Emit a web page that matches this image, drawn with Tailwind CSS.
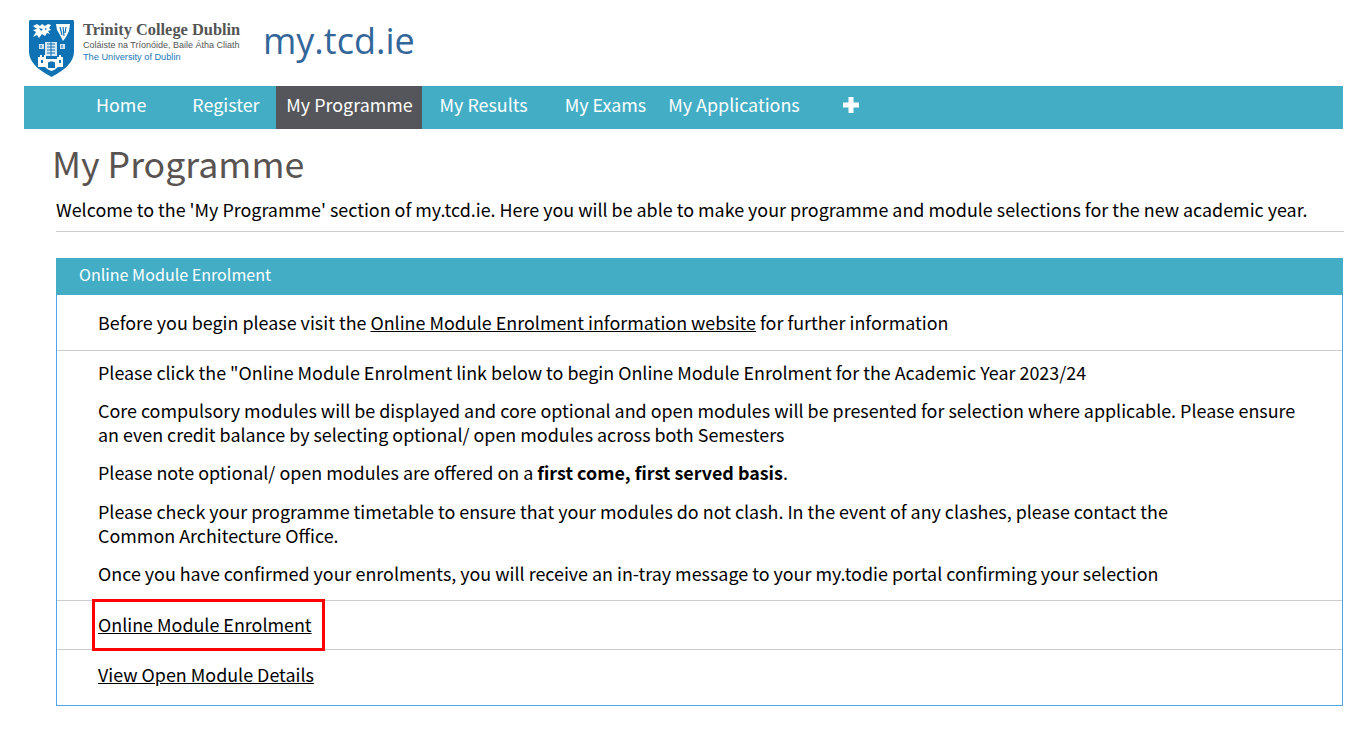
<!DOCTYPE html>
<html lang="en">
  <head>
    <meta charset="UTF-8" />
    <meta name="viewport" content="width=device-width, initial-scale=1.0" />
    <title>my.tcd.ie</title>
    <script src="https://cdn.jsdelivr.net/npm/@tailwindcss/browser@4"></script>
  </head>
  <body class="bg-white text-black font-['Noto_Sans_CJK_JP',sans-serif] text-[17.900px] leading-[24px] overflow-hidden">
    <header class="h-[86px] flex items-start pl-[29px] pt-[20px]">
      <svg class="w-[45px] h-[57px] shrink-0" viewBox="0 0 45 57">
        <path d="M1 0H44L45 1V31C45 44 33 51 22.500 57C12 51 0 44 0 31V1Z" fill="#0f72b5" />
        <!-- lion -->
        <path d="M4 6L8 4L11 6L13 4L16 6L19 4L22 5L20 8L22 10L19 11L21 14L18 13L16 16L13 14L10 18L8 15L4 17L7 12L4 10L8 9Z" fill="#fff" />
        <path d="M10 8L14 9L12 11ZM16 8L18 9L16 10Z" fill="#0f72b5" />
        <!-- harp -->
        <path d="M27 4H41L40 11L37 17L34 21L31 15L28 10Z" fill="#fff" />
        <path d="M31 7L33 15M34 7L35 16M37 7L36 13" stroke="#0f72b5" stroke-width="1.200" />
        <!-- book -->
        <rect x="16" y="22" width="12" height="14" fill="#dbe9f4" />
        <path d="M18 24H26M18 27H26M18 30H26M18 33H26M22 22V36" stroke="#0f72b5" />
        <path d="M10 24H15V29H10ZM31 24H36V29H31Z" fill="#cfe3f1" />
        <path d="M12 25V28M33 25V28" stroke="#0f72b5" />
        <!-- castle -->
        <path d="M9 37H11V35H13V37H15V35H17V39H28V37H30V35H32V37H34V47H29C27 49 25 50 22.500 51C20 50 18 49 16 47H9Z" fill="#fff" />
        <path d="M19 48V43C19 41 26 41 26 43V48ZM12 40H14V43H12ZM30 40H32V43H30Z" fill="#0f72b5" />
      </svg>
      <div class="ml-[9px] w-[170px] shrink-0 whitespace-nowrap">
        <div class="font-['Liberation_Serif',serif] font-bold text-[16.400px] leading-[18px] text-[#555] mt-[1px]">Trinity College Dublin</div>
        <div class="font-['Liberation_Sans',sans-serif] text-[9px] leading-[12px] text-[#555]">Coláiste na Tríonóide, Baile Átha Cliath</div>
        <div class="font-['Liberation_Sans',sans-serif] text-[9.200px] leading-[12px] text-[#1b78b8]">The University of Dublin</div>
      </div>
      <div class="ml-[10px] -mt-[1px] text-[36px] leading-[44px] text-[#336699] font-['Open_Sans',sans-serif] whitespace-nowrap">my.tcd.ie</div>
    </header>

    <nav class="ml-[24px] w-[1319px] h-[43px] bg-[#44adc6] text-white flex items-stretch whitespace-nowrap">
      <a class="ml-[61px] px-[11px] pb-[8px] flex items-center" href="#">Home</a>
      <a class="ml-[24px] pl-[11px] pr-[10px] pb-[8px] flex items-center" href="#">Register</a>
      <a class="ml-[6px] w-[146px] pl-[2px] pb-[8px] flex items-center justify-center bg-[#54565b]" href="#">My Programme</a>
      <a class="ml-[7px] px-[11px] pb-[8px] flex items-center" href="#">My Results</a>
      <a class="ml-[15px] px-[11px] pb-[8px] flex items-center" href="#">My Exams</a>
      <a class="px-[11px] pb-[8px] flex items-center" href="#">My Applications</a>
      <a class="ml-[21px] px-[11px] pb-[5px] flex items-center" href="#">
        <svg class="w-[16px] h-[16px]" viewBox="0 0 16 16"><path d="M5.500 0H10.500V5.500H16V10.500H10.500V16H5.500V10.500H0V5.500H5.500Z" fill="#fff" /></svg>
      </a>
    </nav>

    <main class="ml-[56px] w-[1287px]">
      <h1 class="-ml-[4px] mt-[12px] text-[35.700px] leading-[44px] font-normal text-[#595451]">My Programme</h1>
      <p class="mt-[12px] whitespace-nowrap">Welcome to the 'My Programme' section of my.tcd.ie. Here you will be able to make your programme and module selections for the new academic year.</p>
      <hr class="mt-[10px] border-0 border-t border-[#ccc] w-[1288px]" />

      <section class="mt-[26px] border border-[#4da6e8]">
        <div class="-m-px mb-0 h-[37px] bg-[#44adc6] text-white text-[16.100px] pl-[23px] pb-[5px] flex items-center">Online Module Enrolment</div>
        <div class="h-[56px] pl-[41px] pb-[2px] flex items-center border-b border-[#ccc]">
          <p>Before you begin please visit the <a class="underline" href="#">Online Module Enrolment information website</a> for further information</p>
        </div>
        <div class="h-[250px] pl-[41px] pr-[40px] pt-[9px] border-b border-[#ccc]">
          <p>Please click the "Online Module Enrolment link below to begin Online Module Enrolment for the Academic Year 2023/24</p>
          <p class="mt-[14px]">Core compulsory modules will be displayed and core optional and open modules will be presented for selection where applicable. Please ensure an even credit balance by selecting optional/ open modules across both Semesters</p>
          <p class="mt-[14px]">Please note optional/ open modules are offered on a <b>first come, first served basis</b>.</p>
          <p class="mt-[15px] pr-[80px]">Please check your programme timetable to ensure that your modules do not clash. In the event of any clashes, please contact the Common Architecture Office.</p>
          <p class="mt-[14px]">Once you have confirmed your enrolments, you will receive an in-tray message to your my.todie portal confirming your selection</p>
        </div>
        <div class="relative h-[49px] pl-[41px] pb-[2px] flex items-center border-b border-[#ccc]">
          <a class="underline" href="#">Online Module Enrolment</a>
          <div class="absolute left-[35px] top-[-2px] w-[233px] h-[52px] border-[3px] border-[#f00]"></div>
        </div>
        <div class="h-[55px] pl-[41px] pb-[7px] flex items-center">
          <a class="underline" href="#">View Open Module Details</a>
        </div>
      </section>
    </main>
  </body>
</html>
